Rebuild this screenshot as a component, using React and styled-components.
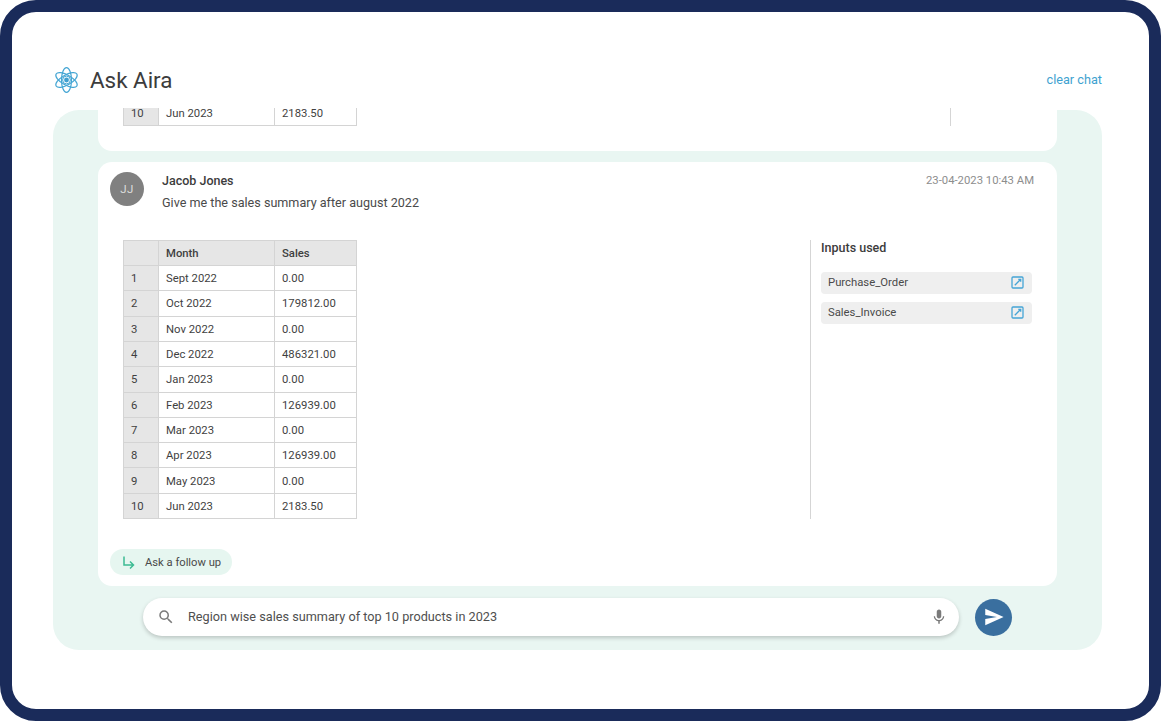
import React from 'react';
import styled, { createGlobalStyle } from 'styled-components';

const GlobalStyle = createGlobalStyle`
  html, body {
    margin: 0;
    padding: 0;
    background: #ffffff;
  }
  * {
    box-sizing: border-box;
  }
`;

const Frame = styled.div`
  width: 1161px;
  height: 721px;
  border: 12px solid #1a2b5a;
  border-radius: 36px;
  background: #ffffff;
  padding: 0 47px 59px 41px;
  display: flex;
  flex-direction: column;
  overflow: hidden;
  font-family: Roboto, "Liberation Sans", sans-serif;
`;

const Header = styled.header`
  height: 98px;
  flex: none;
  padding: 40px 0 0 1px;
`;

const HeaderRow = styled.div`
  display: flex;
  align-items: center;
  height: 56px;
`;

const Title = styled.h1`
  margin: 0 0 1px 11px;
  font-size: 22.4px;
  font-weight: 400;
  color: #3c3c3c;
`;

const ClearChat = styled.a`
  margin: 0 0 1px auto;
  font-size: 12.7px;
  color: #3ea2d0;
`;

const Panel = styled.main`
  flex: 1;
  min-height: 0;
  background: #e9f6f2;
  border-radius: 26px;
  display: flex;
  flex-direction: column;
  padding: 0 45px 14px;
`;

const Scroller = styled.div`
  flex: 1;
  min-height: 0;
  margin-top: -2px;
  display: flex;
  flex-direction: column;
  justify-content: flex-end;
  gap: 11px;
  overflow: hidden;
`;

const Card = styled.section`
  flex: none;
  background: #ffffff;
  border-radius: 14px;
  padding: 10px 23px 11px 12px;
`;

const Meta = styled.div`
  display: flex;
  height: 48px;
`;

const Avatar = styled.div`
  width: 34px;
  height: 34px;
  border-radius: 50%;
  background: #808080;
  color: #dcdcdc;
  font-size: 11.5px;
  letter-spacing: 0.5px;
  display: flex;
  align-items: center;
  justify-content: center;
  flex: none;
  margin-right: 18px;
`;

const Who = styled.div`
  flex: 1;
`;

const Name = styled.div`
  font-size: 12.5px;
  font-weight: 500;
  line-height: 18px;
  color: #3c3c3c;
`;

const Question = styled.div`
  font-size: 12.6px;
  line-height: 18px;
  margin-top: 4px;
  color: #4a4a4a;
`;

const Stamp = styled.div`
  font-size: 11.3px;
  line-height: 18px;
  color: #8d8d8d;
`;

const Body = styled.div`
  display: flex;
  justify-content: space-between;
  margin-top: ${props => props.$top}px;
  padding-left: 13px;
`;

const Table = styled.table`
  border-collapse: collapse;
  table-layout: fixed;
  width: 233px;
  font-size: 11.3px;
  color: #3f3f3f;
`;

const Th = styled.th`
  height: 25.3px;
  padding: 1px 0 0 7px;
  background: #e6e6e6;
  border: 1px solid #d4d4d4;
  font-weight: 500;
  text-align: left;
  width: ${props => props.$w}px;
`;

const Td = styled.td`
  height: 25.3px;
  padding: 1px 0 0 7px;
  border: 1px solid #d4d4d4;
  background: #ffffff;
  width: ${props => props.$w}px;
`;

const IndexCell = styled(Td)`
  background: #e6e6e6;
`;

const Inputs = styled.aside`
  width: ${props => props.$w}px;
  border-left: 1px solid #d5d5d5;
  padding-left: 10px;
  flex: none;
  margin-right: ${props => props.$right}px;
`;

const InputsTitle = styled.div`
  font-size: 12.5px;
  font-weight: 500;
  line-height: 16px;
  color: #3c3c3c;
`;

const InputList = styled.div`
  display: flex;
  flex-direction: column;
  gap: 8px;
  margin-top: 16px;
`;

const InputItem = styled.div`
  height: 22px;
  width: 211px;
  background: #efefef;
  border-radius: 4px;
  display: flex;
  align-items: center;
  justify-content: space-between;
  padding: 0 8px 0 7px;
  font-size: 11.3px;
  color: #4a4a4a;
`;

const FollowUp = styled.button`
  margin-top: 30px;
  height: 26px;
  width: 122px;
  border: none;
  border-radius: 13px;
  background: #e6f6f0;
  display: flex;
  align-items: center;
  gap: 10px;
  padding: 0 0 0 12px;
  font: 400 11.2px Roboto, sans-serif;
  color: #4a4a4a;
`;

const TailSpacer = styled.div`
  height: 14px;
`;

const InputRow = styled.div`
  flex: none;
  display: flex;
  align-items: center;
  margin-top: 12px;
  padding-left: 45px;
`;

const SearchBar = styled.div`
  width: 816px;
  height: 38px;
  border-radius: 19px;
  background: #ffffff;
  box-shadow: 0 2px 4px rgba(0, 0, 0, 0.2);
  display: flex;
  align-items: center;
  padding: 0 11px 0 14px;
`;

const Query = styled.div`
  flex: 1;
  margin: 0 0 1px 13px;
  font-size: 12.7px;
  color: #4f4f4f;
`;

const Send = styled.button`
  width: 37px;
  height: 37px;
  border: none;
  border-radius: 50%;
  background: #3a6f9f;
  margin-left: 16px;
  padding: 0;
  display: flex;
  align-items: center;
  justify-content: center;
`;

const salesRows = [
  ['Sept 2022', '0.00'],
  ['Oct 2022', '179812.00'],
  ['Nov 2022', '0.00'],
  ['Dec 2022', '486321.00'],
  ['Jan 2023', '0.00'],
  ['Feb 2023', '126939.00'],
  ['Mar 2023', '0.00'],
  ['Apr 2023', '126939.00'],
  ['May 2023', '0.00'],
  ['Jun 2023', '2183.50'],
];

const AtomLogo = () => (
  <svg width="25" height="26" viewBox="0 0 25 26" fill="none" stroke="#45a6d4" strokeWidth="1.2">
    <ellipse cx="12.5" cy="13" rx="12" ry="5" transform="rotate(30 12.5 13)" />
    <ellipse cx="12.5" cy="13" rx="12" ry="5" transform="rotate(-30 12.5 13)" />
    <ellipse cx="12.5" cy="13" rx="5" ry="12.4" />
    <circle cx="12.5" cy="13" r="2.400" fill="#3f9fcf" stroke="none" />
    <circle cx="12.5" cy="13" r="3.900" strokeWidth="1" />
  </svg>
);

const OpenIcon = () => (
  <svg width="13" height="13" viewBox="0 0 13 13" fill="none" stroke="#46a5d6" strokeWidth="1.3">
    <rect x="1" y="1" width="11" height="11" rx="1" />
    <path d="M3.800 9.200 9.500 3.500M7.300 3.300h2.400v2.400" />
  </svg>
);

const ArrowIcon = () => (
  <svg width="13" height="13" viewBox="0 0 13 13" fill="none" stroke="#3dbb93" strokeWidth="1.5">
    <path d="M2 0.500v8.500h9.500M8 5.500l3.500 3.500-3.500 3.500" />
  </svg>
);

const SearchIcon = () => (
  <svg width="18" height="18" viewBox="0 0 24 24" fill="#7a7a7a">
    <path d="M15.500 14h-.79l-.28-.27A6.470 6.470 0 0 0 16 9.500 6.500 6.500 0 1 0 9.500 16c1.610 0 3.090-.59 4.230-1.570l.27.28v.79l5 4.990L20.490 19l-4.990-5zm-6 0C7.010 14 5 11.990 5 9.500S7.010 5 9.500 5 14 7.010 14 9.500 11.990 14 9.500 14z" />
  </svg>
);

const MicIcon = () => (
  <svg width="18" height="18" viewBox="0 0 24 24" fill="#7a7a7a">
    <path d="M12 14c1.660 0 3-1.340 3-3V5c0-1.660-1.340-3-3-3S9 3.340 9 5v6c0 1.660 1.340 3 3 3zm5.300-3c0 3-2.540 5.100-5.300 5.100S6.700 14 6.700 11H5c0 3.410 2.720 6.230 6 6.720V21h2v-3.280c3.280-.48 6-3.300 6-6.720h-1.700z" />
  </svg>
);

const SendIcon = () => (
  <svg width="20" height="20" viewBox="0 0 24 24" fill="#ffffff">
    <path d="M1.500 22 23.500 12 1.500 2v7.500l14 2.500-14 2.500z" />
  </svg>
);

const ResultTable = ({ from = 0, head = true }) => (
  <Table>
    {head && (
      <thead>
        <tr>
          <Th $w={35} />
          <Th $w={116}>Month</Th>
          <Th $w={82}>Sales</Th>
        </tr>
      </thead>
    )}
    <tbody>
      {salesRows.slice(from).map((row, i) => (
        <tr key={row[0]}>
          <IndexCell $w={35}>{from + i + 1}</IndexCell>
          <Td $w={116}>{row[0]}</Td>
          <Td $w={82}>{row[1]}</Td>
        </tr>
      ))}
    </tbody>
  </Table>
);

const App = () => (
  <>
    <GlobalStyle />
    <Frame>
      <Header>
        <HeaderRow>
          <AtomLogo />
          <Title>Ask Aira</Title>
          <ClearChat>clear chat</ClearChat>
        </HeaderRow>
      </Header>
      <Panel>
        <Scroller>
          <Card>
            <Body $top={0}>
              <ResultTable from={9} head={false} />
              <Inputs $w={83} $right={1} />
            </Body>
            <TailSpacer />
          </Card>
          <Card>
            <Meta>
              <Avatar>JJ</Avatar>
              <Who>
                <Name>Jacob Jones</Name>
                <Question>Give me the sales summary after august 2022</Question>
              </Who>
              <Stamp>23-04-2023 10:43 AM</Stamp>
            </Meta>
            <Body $top={20}>
              <ResultTable />
              <Inputs $w={222} $right={2}>
                <InputsTitle>Inputs used</InputsTitle>
                <InputList>
                  <InputItem>Purchase_Order<OpenIcon /></InputItem>
                  <InputItem>Sales_Invoice<OpenIcon /></InputItem>
                </InputList>
              </Inputs>
            </Body>
            <FollowUp><ArrowIcon />Ask a follow up</FollowUp>
          </Card>
        </Scroller>
        <InputRow>
          <SearchBar>
            <SearchIcon />
            <Query>Region wise sales summary of top 10 products in 2023</Query>
            <MicIcon />
          </SearchBar>
          <Send><SendIcon /></Send>
        </InputRow>
      </Panel>
    </Frame>
  </>
);

export default App;
